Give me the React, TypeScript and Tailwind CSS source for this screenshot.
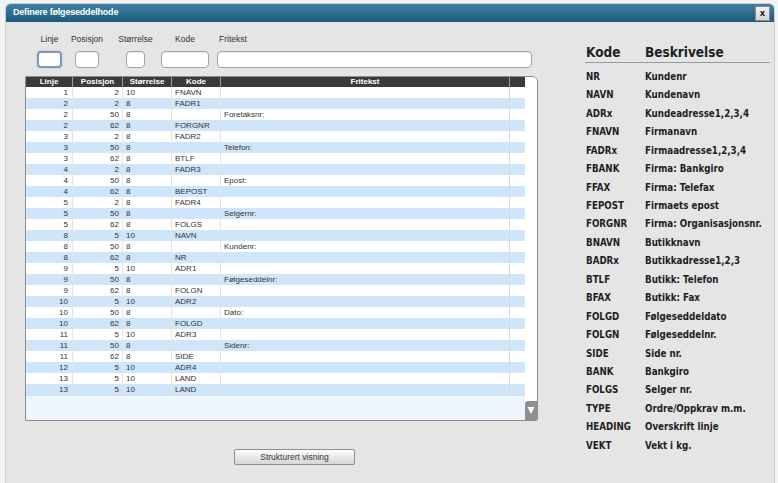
import React from 'react';

type Row = { linje: number; pos: number; str: number; kode: string; tekst: string };

const rows: Row[] = [
  { linje: 1, pos: 2, str: 10, kode: 'FNAVN', tekst: '' },
  { linje: 2, pos: 2, str: 8, kode: 'FADR1', tekst: '' },
  { linje: 2, pos: 50, str: 8, kode: '', tekst: 'Foretaksnr:' },
  { linje: 2, pos: 62, str: 8, kode: 'FORGNR', tekst: '' },
  { linje: 3, pos: 2, str: 8, kode: 'FADR2', tekst: '' },
  { linje: 3, pos: 50, str: 8, kode: '', tekst: 'Telefon:' },
  { linje: 3, pos: 62, str: 8, kode: 'BTLF', tekst: '' },
  { linje: 4, pos: 2, str: 8, kode: 'FADR3', tekst: '' },
  { linje: 4, pos: 50, str: 8, kode: '', tekst: 'Epost:' },
  { linje: 4, pos: 62, str: 8, kode: 'BEPOST', tekst: '' },
  { linje: 5, pos: 2, str: 8, kode: 'FADR4', tekst: '' },
  { linje: 5, pos: 50, str: 8, kode: '', tekst: 'Selgernr:' },
  { linje: 5, pos: 62, str: 8, kode: 'FOLGS', tekst: '' },
  { linje: 8, pos: 5, str: 10, kode: 'NAVN', tekst: '' },
  { linje: 8, pos: 50, str: 8, kode: '', tekst: 'Kundenr:' },
  { linje: 8, pos: 62, str: 8, kode: 'NR', tekst: '' },
  { linje: 9, pos: 5, str: 10, kode: 'ADR1', tekst: '' },
  { linje: 9, pos: 50, str: 8, kode: '', tekst: 'Følgeseddelnr:' },
  { linje: 9, pos: 62, str: 8, kode: 'FOLGN', tekst: '' },
  { linje: 10, pos: 5, str: 10, kode: 'ADR2', tekst: '' },
  { linje: 10, pos: 50, str: 8, kode: '', tekst: 'Dato:' },
  { linje: 10, pos: 62, str: 8, kode: 'FOLGD', tekst: '' },
  { linje: 11, pos: 5, str: 10, kode: 'ADR3', tekst: '' },
  { linje: 11, pos: 50, str: 8, kode: '', tekst: 'Sidenr:' },
  { linje: 11, pos: 62, str: 8, kode: 'SIDE', tekst: '' },
  { linje: 12, pos: 5, str: 10, kode: 'ADR4', tekst: '' },
  { linje: 13, pos: 5, str: 10, kode: 'LAND', tekst: '' },
  { linje: 13, pos: 5, str: 10, kode: 'LAND', tekst: '' },
];

const codes: [string, string][] = [
  ['NR', 'Kundenr'],
  ['NAVN', 'Kundenavn'],
  ['ADRx', 'Kundeadresse1,2,3,4'],
  ['FNAVN', 'Firmanavn'],
  ['FADRx', 'Firmaadresse1,2,3,4'],
  ['FBANK', 'Firma: Bankgiro'],
  ['FFAX', 'Firma: Telefax'],
  ['FEPOST', 'Firmaets epost'],
  ['FORGNR', 'Firma: Organisasjonsnr.'],
  ['BNAVN', 'Butikknavn'],
  ['BADRx', 'Butikkadresse1,2,3'],
  ['BTLF', 'Butikk: Telefon'],
  ['BFAX', 'Butikk: Fax'],
  ['FOLGD', 'Følgeseddeldato'],
  ['FOLGN', 'Følgeseddelnr.'],
  ['SIDE', 'Side nr.'],
  ['BANK', 'Bankgiro'],
  ['FOLGS', 'Selger nr.'],
  ['TYPE', 'Ordre/Oppkrav m.m.'],
  ['HEADING', 'Overskrift linje'],
  ['VEKT', 'Vekt i kg.'],
];

const grid = 'grid grid-cols-[47px_50px_49px_49px_289px_15px]';
const inputCls = 'h-[17px] bg-white border border-[#a3a3a3] rounded-[4px] shadow-[inset_0_1px_1px_rgba(0,0,0,0.08)]';

export default function App() {
  return (
    <div className="w-[778px] h-[483px] overflow-hidden bg-[#f3f3f3] pt-[3px] pl-[5px] font-['Liberation_Sans',Arial,sans-serif]">
      <div className="w-[770px] h-[490px] bg-[#e5e5e5] border border-[#cfcfcf] rounded-t-[5px] flex flex-col">
        {/* title bar */}
        <div className="h-[18px] rounded-t-[5px] bg-gradient-to-b from-[#3f82a6] to-[#1d5a7c] flex items-center justify-between pl-[7px] pr-[4px]">
          <span className="text-white text-[9px] font-bold tracking-[-0.2px]">Definere følgeseddelhode</span>
          <button className="w-[15px] h-[15px] bg-gradient-to-b from-[#f4f4f4] to-[#d4d4d4] border border-[#8a8a8a] text-[9px] font-bold leading-none text-black flex items-center justify-center">
            x
          </button>
        </div>

        <div className="flex">
          {/* left part */}
          <div className="w-[533px] flex flex-col">
            <div className="flex pl-[24px] pt-[12px] text-[8.5px] text-[#333]">
              <div className="w-[39px] flex flex-col items-center">
                <span className="h-[10px] leading-[10px]">Linje</span>
                <div className="mt-[7px] w-[25px] h-[17px] bg-white border-2 border-[#7d9bb8] rounded-[4px] shadow-[0_0_2px_#9fb8cf]" />
              </div>
              <div className="ml-[1px] w-[34px] flex flex-col items-center">
                <span className="h-[10px] leading-[10px]">Posisjon</span>
                <div className={`mt-[7px] w-[24px] ${inputCls}`} />
              </div>
              <div className="ml-[10px] w-[43px] flex flex-col items-center">
                <span className="h-[10px] leading-[10px]">Størrelse</span>
                <div className={`mt-[7px] w-[19px] ${inputCls}`} />
              </div>
              <div className="ml-[4px] w-[48px] flex flex-col items-center">
                <span className="h-[10px] leading-[10px]">Kode</span>
                <div className={`mt-[7px] w-[48px] ${inputCls}`} />
              </div>
              <div className="ml-[8px] w-[315px] flex flex-col">
                <span className="h-[10px] leading-[10px] pl-[2px]">Fritekst</span>
                <div className={`mt-[7px] w-[315px] ${inputCls}`} />
              </div>
            </div>

            {/* table */}
            <div className="ml-[19px] mt-[8px] w-[513px] h-[345px] border border-[#8c8c8c] rounded-tr-[6px] rounded-br-[2px] bg-white flex overflow-hidden">
              <div className="w-[499px] flex flex-col">
                <div className={`${grid} h-[10px] bg-[#3b3b3b] text-white text-[8px] font-bold leading-[10px] text-center`}>
                  <div className="border-r border-[#9a9a9a]">Linje</div>
                  <div className="border-r border-[#9a9a9a]">Posisjon</div>
                  <div className="border-r border-[#9a9a9a]">Størrelse</div>
                  <div className="border-r border-[#9a9a9a]">Kode</div>
                  <div className="border-r border-[#9a9a9a]">Fritekst</div>
                  <div />
                </div>
                {rows.map((r, i) => (
                  <div
                    key={i}
                    className={`${grid} h-[11px] text-[8px] leading-[11px] text-[#333] ${i % 2 === 1 ? 'bg-[#cfe5fa]' : 'bg-white'}`}
                  >
                    <div className="border-r border-[#e4e4e4] text-right pr-[4px]">{r.linje}</div>
                    <div className="border-r border-[#e4e4e4] text-right pr-[3px]">{r.pos}</div>
                    <div className="border-r border-[#e4e4e4] pl-[3px]">{r.str}</div>
                    <div className="border-r border-[#e4e4e4] pl-[3px]">{r.kode}</div>
                    <div className="border-r border-[#dadada] pl-[3px]">{r.tekst}</div>
                    <div />
                  </div>
                ))}
                <div className="flex-1 bg-[#eef5fc] border-t border-[#d4dfe9]" />
              </div>
              <div className="flex-1 flex flex-col justify-end bg-white">
                <div className="h-[19px] bg-[#8f8f8f] rounded-tl-[3px] flex items-center justify-center">
                  <svg width="8" height="9" viewBox="0 0 8 9">
                    <path d="M0.5 1 L7.5 1 L4 8 Z" fill="#ffffff" />
                  </svg>
                </div>
              </div>
            </div>

            <div className="ml-[228px] mt-[22px]">
              <button className="w-[121px] h-[16px] bg-gradient-to-b from-[#fdfdfd] to-[#d6d6d6] border border-[#8e8e8e] rounded-[2px] text-[8.5px] text-[#333] leading-none">
                Strukturert visning
              </button>
            </div>
          </div>

          {/* right panel */}
          <div className="ml-[46px] w-[185px] pt-[22px] font-['DejaVu_Sans_Condensed','DejaVu_Sans',sans-serif] text-[#1e1e1e]">
            <div className="flex border-b border-[#9a9a9a] pb-[1px] text-[13.5px] font-bold leading-[17px]">
              <span className="w-[60px] pl-[1px]">Kode</span>
              <span>Beskrivelse</span>
            </div>
            <div className="pt-[5px]">
              {codes.map(([k, v]) => (
                <div key={k} className="flex h-[18.45px] items-center text-[9.7px] font-bold">
                  <span className="w-[60px] pl-[1px]">{k}</span>
                  <span>{v}</span>
                </div>
              ))}
            </div>
          </div>
        </div>
      </div>
    </div>
  );
}
